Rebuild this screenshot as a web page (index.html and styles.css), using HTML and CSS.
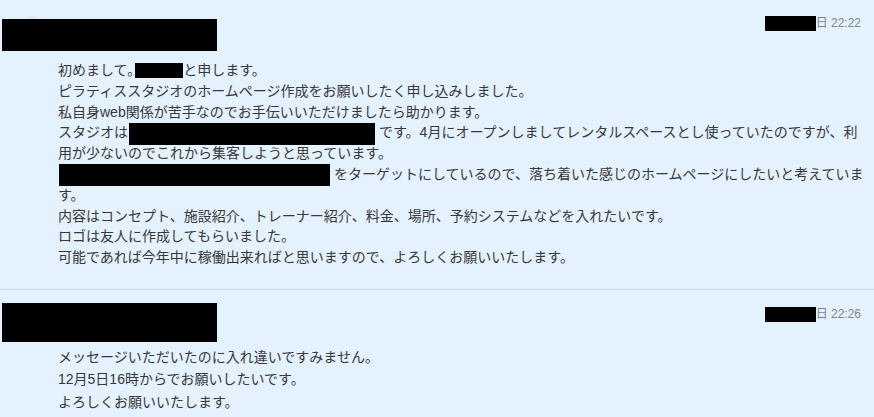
FILE: index.html
```html
<!DOCTYPE html>
<html lang="ja">
  <head>
    <meta charset="UTF-8" />
    <meta name="viewport" content="width=device-width, initial-scale=1.0" />
    <title>メッセージ</title>
    <link rel="stylesheet" href="styles.css">
  </head>
  <body>
    <div class="thread">
      <div class="message first">
        <div class="head">
          <div class="sender">
            <span class="avatar"></span>
            <span class="name">依頼者</span>
            <span class="cover"></span>
          </div>
          <div class="time"><span class="mask"></span>日 22:22</div>
        </div>
        <div class="body">
          <p>初めまして。<span class="mask m1"></span>と申します。</p>
          <p>ピラティススタジオのホームページ作成をお願いしたく申し込みしました。</p>
          <p>私自身web関係が苦手なのでお手伝いいただけましたら助かります。</p>
          <p>スタジオは<span class="mask m2"></span>です。4月にオープンしましてレンタルスペースとし使っていたのですが、利用が少ないのでこれから集客しようと思っています。</p>
          <p><span class="mask m3"></span>をターゲットにしているので、落ち着いた感じのホームページにしたいと考えています。</p>
          <p>内容はコンセプト、施設紹介、トレーナー紹介、料金、場所、予約システムなどを入れたいです。</p>
          <p>ロゴは友人に作成してもらいました。</p>
          <p>可能であれば今年中に稼働出来ればと思いますので、よろしくお願いいたします。</p>
        </div>
      </div>
      <div class="message second">
        <div class="head">
          <div class="sender">
            <span class="avatar"></span>
            <span class="name">依頼者</span>
            <span class="cover"></span>
          </div>
          <div class="time"><span class="mask"></span>日 22:26</div>
        </div>
        <div class="body">
          <p>メッセージいただいたのに入れ違いですみません。</p>
          <p>12月5日16時からでお願いしたいです。</p>
          <p>よろしくお願いいたします。</p>
        </div>
      </div>
    </div>
  </body>
</html>
```

FILE: styles.css
```css
* {
  margin: 0;
  padding: 0;
  box-sizing: border-box;
}
body {
  background-color: #e4f1fe;
  color: #383838;
  font-family: "Liberation Sans", "Noto Sans CJK JP", sans-serif;
}
.message {
  padding: 16px 6px 21px 0;
}
.message + .message {
  border-top: 1px solid #cfd6dd;
  padding-top: 13px;
}
.head {
  display: flex;
  justify-content: space-between;
  align-items: flex-start;
  padding-right: 7px;
}
.sender {
  position: relative;
  display: flex;
  align-items: center;
  column-gap: 10px;
  height: 36px;
  padding-left: 14px;
}
.avatar {
  display: block;
  width: 36px;
  height: 36px;
  border-radius: 50%;
  background-color: #e9eaeb;
}
.name {
  font-size: 14px;
  color: #e4f1fe;
}
/* 名前の黒塗り */
.cover {
  position: absolute;
  left: 2px;
  top: 3px;
  width: 215px;
  height: 32px;
  background-color: #000;
}
.second .cover {
  top: 0;
  height: 39px;
}
.time {
  display: flex;
  align-items: center;
  font-size: 12px;
  color: #7b8591;
  line-height: 15px;
}
.time .mask {
  width: 51px;
  height: 15px;
}
.second .time {
  margin-top: 4px;
}
.body {
  padding-left: 58px;
  font-size: 14px;
  line-height: 20.8px;
  margin-top: 8px;
}
.second .body {
  line-height: 22.4px;
  margin-top: 7px;
}
.mask {
  display: inline-block;
  background-color: #000;
  vertical-align: middle;
}
.m1 {
  width: 48px;
  height: 15px;
  margin: -2px 0 0 -6px;
}
.m2 {
  width: 246px;
  height: 22px;
  margin: -4px 4px -4px 1px;
}
.m3 {
  width: 271px;
  height: 22px;
  margin: -4px 4px -4px 1px;
}
```
